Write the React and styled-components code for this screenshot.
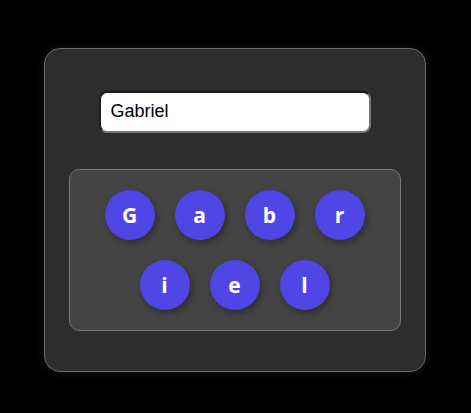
import React, { useState } from 'react'
import styled, { createGlobalStyle } from 'styled-components'

const GlobalStyle = createGlobalStyle`
    html, body {
        margin: 0;
        padding: 0;
        background: #000;
    }
    body {
        min-height: 100vh;
        display: flex;
        align-items: center;
        justify-content: center;
        font-family: "Liberation Sans", Arial, sans-serif;
    }
`

const Card = styled.div`
    box-sizing: border-box;
    width: 382px;
    height: 324px;
    margin: 6px 2px 0 0;
    padding: 42px 24px 0;
    background: #2d2d2d;
    border: 1px solid #6a6a6a;
    border-radius: 16px;
    box-shadow: 0 0 10px rgba(255, 255, 255, 0.08);
    display: flex;
    flex-direction: column;
    align-items: center;
    gap: 36px;
`

const NameInput = styled.input`
    box-sizing: border-box;
    width: 272px;
    height: 42px;
    padding: 0 10px;
    border-radius: 8px;
    border-style: solid;
    border-width: 2px;
    border-color: #1c1c1c #777 #777 #1c1c1c;
    background: #fff;
    color: #000;
    font-family: "Liberation Sans", Arial, sans-serif;
    font-size: 18px;
    outline: none;
`

const Tray = styled.div`
    box-sizing: border-box;
    width: 332px;
    height: 162px;
    padding: 20px;
    background: #444;
    border: 1px solid #777;
    border-radius: 10px;
    display: flex;
    flex-wrap: wrap;
    justify-content: center;
    align-content: flex-start;
    gap: 20px;
`

const Bubble = styled.div`
    width: 50px;
    height: 50px;
    border-radius: 50%;
    background: #4f46e5;
    color: #fff;
    display: flex;
    align-items: center;
    justify-content: center;
    font-family: "Open Sans", "Noto Sans", sans-serif;
    font-weight: 700;
    font-size: 21px;
    box-shadow: 2px 3px 6px rgba(0, 0, 0, 0.35);
`

export default function App() {
    const [name, setName] = useState('Gabriel')

    return (
        <>
            <GlobalStyle />
            <Card>
                <NameInput value={name} onChange={e => setName(e.target.value)} />
                <Tray>
                    {name.split('').map((ch, i) => (
                        <Bubble key={i}>{ch}</Bubble>
                    ))}
                </Tray>
            </Card>
        </>
    )
}
